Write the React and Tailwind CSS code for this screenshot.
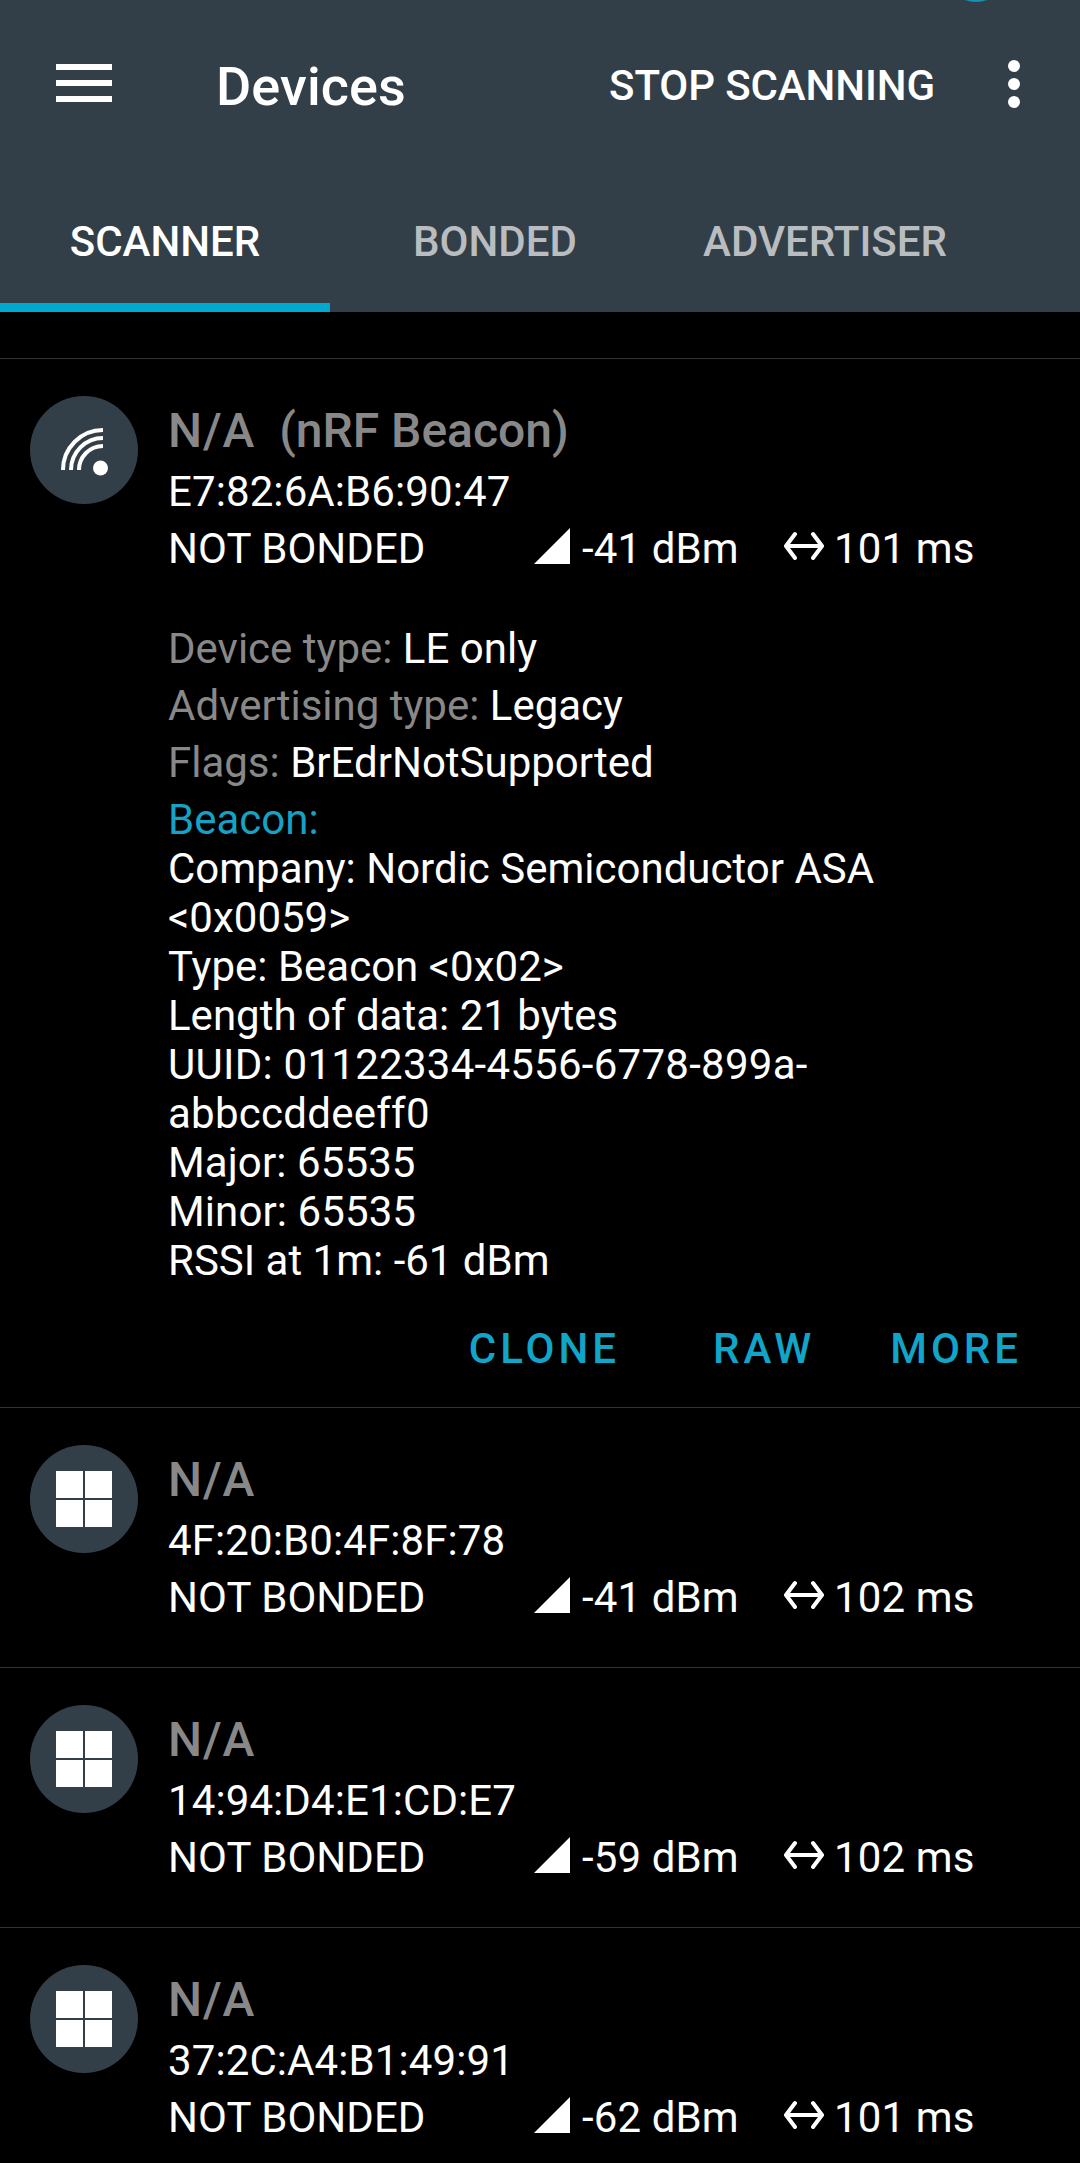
import React from "react";

const details = [
  { text: "Company: Nordic Semiconductor ASA <0x0059>" },
  { text: "Type: Beacon <0x02>" },
  { text: "Length of data: 21 bytes" },
  { text: "UUID: 01122334-4556-6778-899a-abbccddeeff0", className: "tracking-[0.26px]" },
  { text: "Major: 65535", className: "tracking-[0.1px]" },
  { text: "Minor: 65535", className: "tracking-[0.1px]" },
  { text: "RSSI at 1m: -61 dBm" },
];

const windowsDevices = [
  { mac: "4F:20:B0:4F:8F:78", rssi: "-41 dBm", interval: "102 ms" },
  { mac: "14:94:D4:E1:CD:E7", rssi: "-59 dBm", interval: "102 ms" },
  { mac: "37:2C:A4:B1:49:91", rssi: "-62 dBm", interval: "101 ms" },
];

function BeaconIcon() {
  return (
    <svg className="size-[108px]" viewBox="0 0 108 108" fill="none" stroke="#fff" strokeWidth="4">
      <path d="M33 74A40 40 0 0 1 73 34" />
      <path d="M41 74A32 32 0 0 1 73 42" />
      <path d="M49 74A24 24 0 0 1 73 50" />
      <circle cx="70.500" cy="72" r="7.500" fill="#fff" stroke="none" />
    </svg>
  );
}

function WindowsIcon() {
  return (
    <div className="grid grid-cols-2 gap-[2px]">
      <span className="size-[27px] bg-white" />
      <span className="size-[27px] bg-white" />
      <span className="size-[27px] bg-white" />
      <span className="size-[27px] bg-white" />
    </div>
  );
}

function Device({ icon, note = "", mac, rssi, interval, children }) {
  return (
    <li className="flex border-t border-[#333333] pl-[30px]">
      <div className="mt-[37px] flex size-[108px] shrink-0 items-center justify-center rounded-full bg-[#333f48]">
        {icon}
      </div>
      <div className="ml-[30px] flex-1 pt-[43px]">
        <h2 className="whitespace-pre text-[48px] font-medium leading-[57px] text-[#888888]">
          <span className="tracking-[0.9px]">N/A</span>
          {note}
        </h2>
        <p className="mt-[4px] leading-[57px] tracking-[0.1px]">{mac}</p>
        <div className="flex leading-[57px]">
          <span className="w-[366px] tracking-[0.05px]">NOT BONDED</span>
          <svg className="mt-[8px] h-[36px] w-[36px]" viewBox="0 0 36 36">
            <path d="M0 36L36 0V36Z" fill="#fff" />
          </svg>
          <span className="ml-[12px] w-[202px] tracking-[0.1px]">{rssi}</span>
          <svg className="mt-[11px] h-[30px] w-[40px]" viewBox="0 0 40 30" fill="none" stroke="#fff" strokeWidth="4" strokeLinecap="round" strokeLinejoin="round">
            <path d="M3 15H37M11 3L2 15L11 27M29 3L38 15L29 27" />
          </svg>
          <span className="ml-[10px] tracking-[0.15px]">{interval}</span>
        </div>
        {children}
      </div>
    </li>
  );
}

function Field({ label, value }) {
  return (
    <p className="leading-[57px]">
      <span className="text-[#888888]">{label}</span> {value}
    </p>
  );
}

export default function App() {
  return (
    <div className="h-[2163px] w-[1080px] overflow-hidden bg-black font-[Roboto,sans-serif] text-[42px] text-white">
      <header className="relative h-[312px] overflow-hidden bg-[#333f48]">
        <span className="absolute -top-[62px] left-[944px] size-[64px] rounded-full bg-[#1b8fb4]" />
        <div className="flex h-[168px] items-center">
          <div className="mb-[2px] ml-[56px] flex w-[56px] flex-col gap-[10px]">
            <span className="h-[6px] bg-white" />
            <span className="h-[6px] bg-white" />
            <span className="h-[6px] bg-white" />
          </div>
          <h1 className="ml-[104px] pt-[5px] text-[54px] font-medium tracking-[0.1px]">Devices</h1>
          <button className="ml-auto pt-[3px] font-medium tracking-[-0.1px]">STOP SCANNING</button>
          <div className="mr-[60px] ml-[73px] flex flex-col gap-[6px]">
            <span className="size-[12px] rounded-full bg-white" />
            <span className="size-[12px] rounded-full bg-white" />
            <span className="size-[12px] rounded-full bg-white" />
          </div>
        </div>
        <nav className="flex h-[144px] font-medium leading-[147px] text-[#b9bdc0]">
          <div className="w-[330px] border-b-[9px] border-[#00a9ce] text-center text-white">SCANNER</div>
          <div className="w-[330px] text-center">BONDED</div>
          <div className="w-[330px] text-center">ADVERTISER</div>
        </nav>
      </header>
      <ul className="mt-[46px]">
        <Device icon={<BeaconIcon />} note="  (nRF Beacon)" mac="E7:82:6A:B6:90:47" rssi="-41 dBm" interval="101 ms">
          <div className="mt-[43px]">
            <Field label="Device type:" value="LE only" />
            <Field label="Advertising type:" value="Legacy" />
            <Field label="Flags:" value="BrEdrNotSupported" />
            <p className="leading-[57px] text-[#15a2c4]">Beacon:</p>
          </div>
          <div className="-mt-[4px] w-[780px] leading-[49px]">
            {details.map((line) => (
              <p key={line.text} className={line.className}>{line.text}</p>
            ))}
          </div>
          <div className="mt-[15px] mb-[11px] flex h-[96px] items-center justify-end pr-[58px] font-medium tracking-[4px] text-[#10a5c9]">
            <button>CLONE</button>
            <button className="ml-[93px]">RAW</button>
            <button className="ml-[75px]">MORE</button>
          </div>
        </Device>
        {windowsDevices.map((d) => (
          <Device key={d.mac} icon={<WindowsIcon />} {...d}>
            <div className="h-[41px]" />
          </Device>
        ))}
      </ul>
    </div>
  );
}
